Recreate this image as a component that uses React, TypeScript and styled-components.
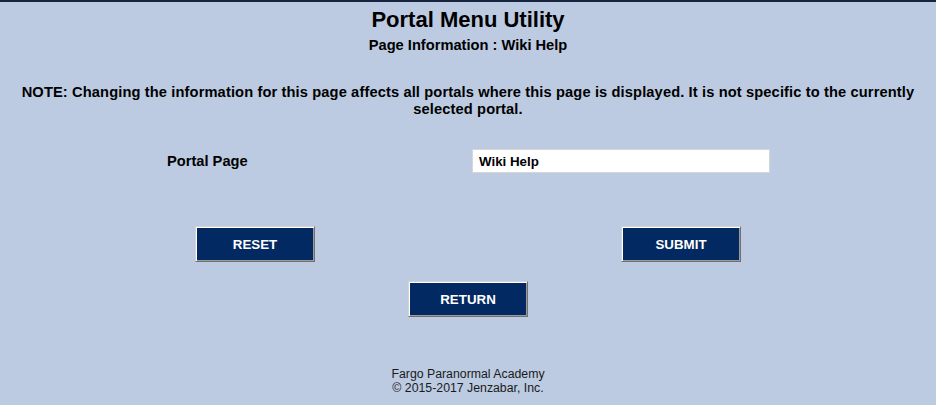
import React from "react";
import styled, { createGlobalStyle } from "styled-components";

const GlobalStyle = createGlobalStyle`
  html, body {
    margin: 0;
    padding: 0;
    background: #bccbe1;
  }
  body {
    font-family: "Liberation Sans", Arial, sans-serif;
    color: #000;
  }
  * { box-sizing: border-box; }
`;

const Page = styled.div`
  border-top: 2px solid #18253f;
  min-height: 100vh;
  padding: 5px 10px 0;
`;

const Header = styled.header`
  text-align: center;
`;

const Title = styled.h1`
  margin: 0;
  font-size: 22px;
  line-height: 25px;
  font-weight: bold;
`;

const Subtitle = styled.h2`
  margin: 5px 0 0;
  font-size: 14.67px;
  line-height: 17px;
  font-weight: bold;
`;

const Note = styled.p`
  margin: 30px 0 0;
  font-size: 14.67px;
  line-height: 17px;
  letter-spacing: 0.12px;
  font-weight: bold;
  text-align: center;
`;

const Grid = styled.div`
  width: 852px;
  margin: 0 auto;
  display: grid;
  grid-template-columns: 426px 426px;
`;

const FieldRow = styled(Grid)`
  margin-top: 31px;
  align-items: center;
`;

const Label = styled.label`
  padding-left: 125px;
  font-size: 14.67px;
  line-height: 17px;
  font-weight: bold;
`;

const InputCell = styled.div`
  padding-left: 4px;
  display: flex;
`;

const TextInput = styled.input`
  width: 298px;
  height: 24px;
  border: 1px solid #d6d6d6;
  background: #fff;
  padding: 0 6px;
  font-family: "Liberation Sans", Arial, sans-serif;
  font-size: 13.33px;
  font-weight: bold;
  color: #000;
  outline: none;
`;

const ButtonRow = styled(Grid)<{ $top: number }>`
  margin-top: ${(p) => p.$top}px;
  justify-items: center;
`;

const SingleRow = styled.div<{ $top: number }>`
  margin-top: ${(p) => p.$top}px;
  display: flex;
  justify-content: center;
`;

const Button = styled.button`
  width: 120px;
  height: 36px;
  background: #022961;
  color: #fff;
  font-family: "Liberation Sans", Arial, sans-serif;
  font-size: 13.33px;
  font-weight: bold;
  border: 1px solid;
  border-color: #d4d4d4 #707070 #707070 #d4d4d4;
  box-shadow: inset 1px 1px 0 #ffffff, inset -1px -1px 0 #9c9c9c;
  padding: 0;
  cursor: pointer;
`;

const Footer = styled.footer`
  margin-top: 50px;
  text-align: center;
  font-size: 12.3px;
  line-height: 14px;
  color: #1a1a1a;
`;

export default function App() {
  return (
    <>
      <GlobalStyle />
      <Page>
        <Header>
          <Title>Portal Menu Utility</Title>
          <Subtitle>Page Information : Wiki Help</Subtitle>
        </Header>
        <Note>
          NOTE: Changing the information for this page affects all portals where this page is
          displayed. It is not specific to the currently selected portal.
        </Note>
        <FieldRow>
          <Label htmlFor="portalPage">Portal Page</Label>
          <InputCell>
            <TextInput id="portalPage" defaultValue="Wiki Help" />
          </InputCell>
        </FieldRow>
        <ButtonRow $top={53}>
          <Button>RESET</Button>
          <Button>SUBMIT</Button>
        </ButtonRow>
        <SingleRow $top={19}>
          <Button>RETURN</Button>
        </SingleRow>
        <Footer>
          <div>Fargo Paranormal Academy</div>
          <div>© 2015-2017 Jenzabar, Inc.</div>
        </Footer>
      </Page>
    </>
  );
}
